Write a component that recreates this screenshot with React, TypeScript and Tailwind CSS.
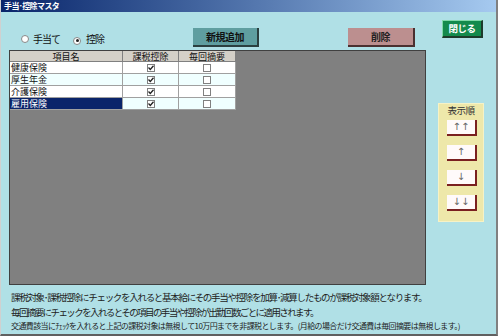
import React from 'react'

const font = { fontFamily: '"Noto Sans CJK JP", sans-serif' }

const rows = ['健康保険', '厚生年金', '介護保険', '雇用保険']

function Check({ checked }: { checked: boolean }) {
  return (
    <span className="inline-flex w-[8px] h-[8px] border border-[#808080] bg-white items-center justify-center">
      {checked && (
        <svg width="6" height="6" viewBox="0 0 6 6">
          <path d="M0.5 2.5 L2.3 4.5 L5.5 0.8" stroke="#222" strokeWidth="1.3" fill="none" />
        </svg>
      )}
    </span>
  )
}

function Radio({ on }: { on: boolean }) {
  return (
    <span className="inline-flex w-[8px] h-[8px] rounded-full border border-[#888] bg-white items-center justify-center">
      {on && <span className="w-[3px] h-[3px] rounded-full bg-[#222]" />}
    </span>
  )
}

export default function App() {
  return (
    <div
      className="w-[498px] h-[336px] overflow-hidden bg-[#b0e0e6] border-r-2 border-b-2 border-l border-r-[#808080] border-b-[#606060] border-l-[#d0d0d0] flex flex-col text-[#111]"
      style={font}
    >
      {/* Title bar */}
      <div className="shrink-0 h-[12px] bg-gradient-to-r from-[#0a246a] to-[#a6caf0] flex items-center pl-[3px] overflow-hidden">
        <span className="text-[8px] leading-none font-bold text-white tracking-[-0.6px]">手当･控除マスタ</span>
      </div>

      {/* Top controls */}
      <div className="shrink-0 h-[38px] flex items-start">
        <div className="ml-[20px] mt-[21px] w-[172px] flex items-center text-[10px] leading-none tracking-[-1px]">
          <Radio on={false} />
          <span className="ml-[4px]">手当て</span>
          <span className="ml-[13px]"><Radio on={true} /></span>
          <span className="ml-[5px]">控除</span>
        </div>
        <button className="mt-[16px] w-[66px] h-[19px] bg-[#5f9ea0] border-r-2 border-b-2 border-[#2b3f3f] text-[10px] font-bold leading-none text-[#111] tracking-[-0.5px]">
          新規追加
        </button>
        <button className="ml-[89px] mt-[16px] w-[67px] h-[19px] bg-[#bc8f8f] border-r-2 border-b-2 border-[#4a3030] text-[10px] font-bold leading-none text-[#222] tracking-[-0.5px]">
          削除
        </button>
        <button className="ml-[27px] mt-[8px] w-[41px] h-[18px] bg-[#138a4c] border-t border-l border-[#7fd8a8] border-r-2 border-b-2 border-r-[#1d3b2b] border-b-[#1d3b2b] text-[9.5px] font-bold leading-none text-white tracking-[-0.5px]">
          閉じる
        </button>
      </div>

      {/* Main area */}
      <div className="shrink-0 flex items-start">
        <div className="ml-[8px] w-[417px] h-[235px] bg-[#808080] border border-[#404040] flex flex-col">
          <div className="flex h-[11px] text-[9px] leading-[9px]">
            <div className="w-[113px] bg-[#d4d0c8] border-r border-b border-[#808080] flex items-center justify-center">項目名</div>
            <div className="w-[56px] bg-[#d4d0c8] border-r border-b border-[#808080] flex items-center justify-center">課税控除</div>
            <div className="w-[57px] bg-[#d4d0c8] border-r border-b border-[#808080] flex items-center justify-center">毎回摘要</div>
          </div>
          {rows.map((r, i) => {
            const bg = i % 2 === 0 ? 'bg-white' : 'bg-[#f0ffff]'
            const sel = i === 3
            return (
              <div key={r} className="flex h-[12px] text-[9px] leading-[9px]">
                <div className={`w-[113px] border-r border-b border-[#a0a0a0] flex items-center pl-[1px] ${sel ? 'bg-[#0a246a] text-white' : bg}`}>{r}</div>
                <div className={`w-[56px] border-r border-b border-[#a0a0a0] flex items-center justify-center ${bg}`}><Check checked={true} /></div>
                <div className={`w-[57px] border-r border-b border-[#a0a0a0] flex items-center justify-center ${bg}`}><Check checked={false} /></div>
              </div>
            )
          })}
        </div>

        {/* 表示順 panel */}
        <div className="ml-[12px] mt-[53px] w-[46px] h-[119px] bg-[#eee8aa] border border-[#f6f2c6] flex flex-col items-center">
          <span className="text-[9.5px] leading-none mt-[2px] text-[#333] tracking-[-0.5px]">表示順</span>
          <div className="mt-[4px] flex flex-col gap-[9px] ml-[2px]">
            {['↑↑', '↑', '↓', '↓↓'].map(a => (
              <div
                key={a}
                className="w-[30px] h-[16px] bg-[#fffafa] border-r-2 border-b-2 border-[#7a2020] flex items-center justify-center text-[10px] text-[#666] leading-none"
                style={{ fontFamily: '"DejaVu Sans", sans-serif' }}
              >
                {a}
              </div>
            ))}
          </div>
        </div>
      </div>

      {/* Notes */}
      <div className="shrink-0 pl-[10px] mt-[5px] flex flex-col text-[#222] whitespace-nowrap">
        <p className="text-[9.5px] leading-[15px] tracking-[-1.3px]">課税対象･課税控除にチェックを入れると基本給にその手当や控除を加算･減算したものが課税対象額となります。</p>
        <p className="text-[9.5px] leading-[15px] tracking-[-1.6px]">毎回摘要にチェックを入れるとその項目の手当や控除が出勤回数ごとに適用されます。</p>
        <p className="text-[8px] leading-[12px] tracking-[-0.6px]">交通費該当にﾁｪｯｸを入れると上記の課税対象は無視して10万円までを非課税とします。(月給の場合だけ交通費は毎回摘要は無視します。)</p>
      </div>
    </div>
  )
}
